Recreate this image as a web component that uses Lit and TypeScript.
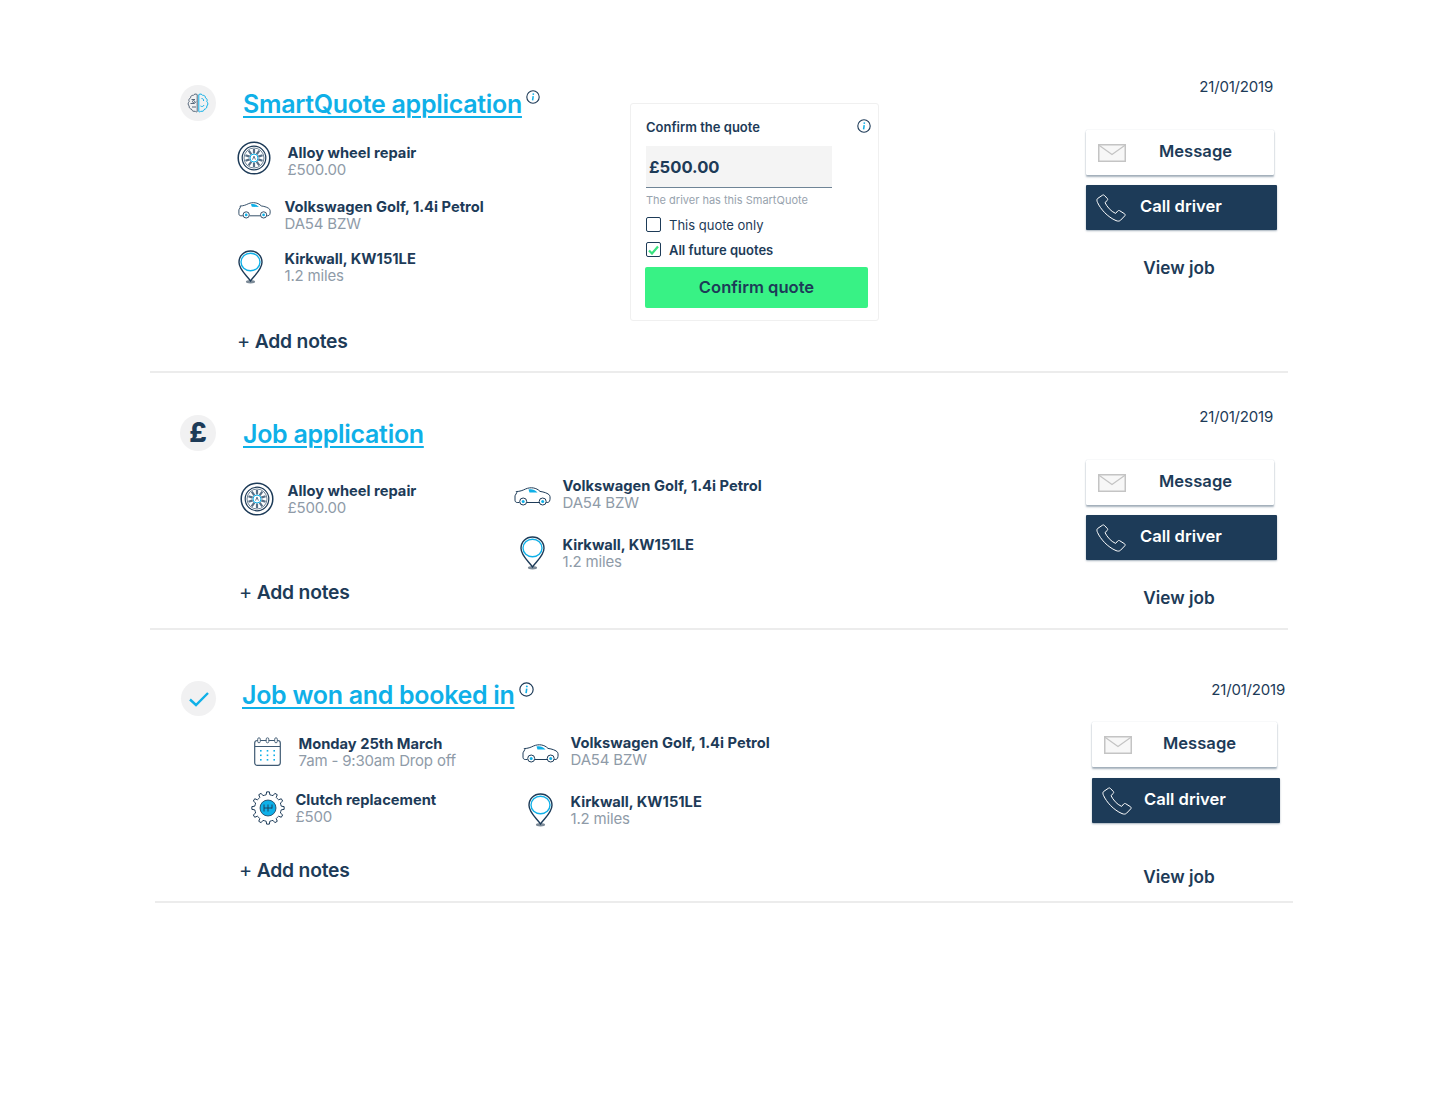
import { LitElement, html, css, svg } from "lit";
import { customElement } from "lit/decorators.js";

const DARK = "#1d3b58";
const BLUE = "#0fb0e8";

const gearPath = (() => {
  const cx = 17, cy = 17, teeth = 12;
  let d = "";
  for (let i = 0; i < teeth; i++) {
    const a = (i / teeth) * Math.PI * 2;
    const step = (Math.PI * 2) / teeth;
    const pts: [number, number][] = [
      [13.2, a - step * 0.5],
      [13.4, a - step * 0.26],
      [16.2, a - step * 0.16],
      [16.2, a + step * 0.16],
      [13.4, a + step * 0.26],
    ];
    for (const [r, t] of pts) {
      d += `${d ? "L" : "M"}${(cx + r * Math.cos(t)).toFixed(2)} ${(cy + r * Math.sin(t)).toFixed(2)}`;
    }
  }
  return d + "Z";
})();

const spokes = Array.from({ length: 10 }, (_, i) => (i * 360) / 10);

const wheel = html`<svg width="34" height="34" viewBox="0 0 34 34" fill="none">
  <circle cx="17" cy="17" r="15.8" stroke=${DARK} stroke-width="1.5"/>
  <circle cx="17" cy="17" r="11.8" stroke=${DARK} stroke-width="1.2"/>
  <circle cx="17" cy="17" r="10" stroke="#6f8496" stroke-width="1"/>
  ${spokes.map((r) => svg`<path d="M17 12.5V8" stroke="#587087" stroke-width="2.2" transform="rotate(${r} 17 17)"/>`)}
  <circle cx="17" cy="17" r="4" fill="#fff" stroke=${BLUE} stroke-width="1"/>
  <path d="M15.6 18.6L17 15.2 18.4 18.6" stroke=${DARK} stroke-width=".7"/>
</svg>`;

const car = (w: number) => html`<svg width=${w} height="20" viewBox="0 0 37 20" fill="none">
  <path d="M5.5 16.5H3.2C1.8 16.5 1 15.5 1 14.2V9.8L2.8 6.6 2.2 5.6C6 5.4 8.5 4.5 11.5 3 16.5 .8 22.5 1.6 26 5.4 30 6 34 7.2 35.6 9.3 36.3 10.6 36.2 13.5 35.6 15 35.2 16 34.3 16.5 33 16.5H32.2M12.9 16.5H25" stroke=${DARK} stroke-width="1"/>
  <path d="M14.5 3.6C17.5 3 20.5 3.3 23.5 6.6L15.5 6.4Z" fill=${BLUE}/>
  <circle cx="9.2" cy="15.5" r="3.5" fill="#fff" stroke=${DARK} stroke-width="1"/>
  <circle cx="9.2" cy="15.5" r="1.5" fill=${BLUE}/>
  <circle cx="28.7" cy="15.5" r="3.5" fill="#fff" stroke=${DARK} stroke-width="1"/>
  <circle cx="28.7" cy="15.5" r="1.5" fill=${BLUE}/>
</svg>`;

const pin = html`<svg width="25" height="34" viewBox="0 0 25 34" fill="none">
  <ellipse cx="12.5" cy="31.7" rx="4.6" ry="1.7" fill="#7d8b98"/>
  <path d="M12.5 31C9.5 26 1 20 1 12.3 1 5.6 6 1 12.5 1S24 5.6 24 12.3C24 20 15.5 26 12.5 31Z" fill="#fff" stroke=${DARK} stroke-width="1.4"/>
  <ellipse cx="12.5" cy="12" rx="9.5" ry="8.8" fill="#fff" stroke=${BLUE} stroke-width="1.4"/>
</svg>`;

const calendar = html`<svg width="27" height="29" viewBox="0 0 27 29" fill="none">
  <rect x=".7" y="3.5" width="25.6" height="24.8" rx="2.5" stroke="#3f5a73" stroke-width="1.2"/>
  <path d="M1 9.5H26" stroke="#3f5a73" stroke-width="1"/>
  ${[5, 13.5, 22].map((x) => svg`<rect x=${x - 1.3} y=".8" width="2.6" height="5" rx="1.3" fill="#fff" stroke="#3f5a73" stroke-width=".9"/>`)}
  ${[13, 17.5, 22].map((y) => [6, 12.7, 19.4].map((x) => svg`<rect x=${x} y=${y} width="1.6" height="1.6" fill=${BLUE}/>`))}
</svg>`;

const gear = html`<svg width="34" height="34" viewBox="0 0 34 34" fill="none">
  <path d=${gearPath} fill="#fff" stroke=${DARK} stroke-width="1"/>
  <circle cx="17" cy="17" r="8" fill=${BLUE} stroke=${DARK} stroke-width=".8"/>
  <path d="M13 13.5v7M17 13.5v7M21 13.5v4M13 17h8" stroke=${DARK} stroke-width=".9"/>
</svg>`;

const brain = html`<svg width="22" height="20" viewBox="0 0 22 20" fill="none" stroke-width="1">
  <g stroke="#56677a">
    <path d="M10.2 1.6C8.8.6 7 1 6.4 2.4 4.8 2 3.4 3.2 3.6 4.8 2 5.4 1.4 7.2 2.2 8.6 .8 9.8 .8 12 2.2 13 1.8 14.6 3 16 4.4 16 4.8 17.8 6.6 18.8 8.2 18.2 8.8 19 9.6 19 10.2 18.6Z"/>
    <path d="M4.5 6.5H8M3.5 10.5H7.5L9 8.5M5 14h4"/>
    <circle cx="6.5" cy="8.5" r="1"/>
  </g>
  <g stroke=${BLUE}>
    <path d="M11.8 1.6C13.2.6 15 1 15.6 2.4 17.2 2 18.6 3.2 18.4 4.8 20 5.4 20.6 7.2 19.8 8.6 21.2 9.8 21.2 12 19.8 13 20.2 14.6 19 16 17.6 16 17.2 17.8 15.4 18.8 13.8 18.2 13.2 19 12.4 19 11.8 18.6Z"/>
    <path d="M14.5 5.5c1.5 0 2.5 1 2 2.5M13.5 13c1.5 1 3 .5 3.5-1"/>
  </g>
</svg>`;

const pound = html`<span class="pound">£</span>`;

const tick = html`<svg width="22" height="16" viewBox="0 0 22 16" fill="none">
  <path d="M2 8.5L8 14 20 2" stroke=${BLUE} stroke-width="2.4"/>
</svg>`;

const info = (s: number) => html`<svg class="info" width=${s} height=${s} viewBox="0 0 14 14" fill="none">
  <circle cx="7" cy="7" r="6.2" stroke=${DARK} stroke-width="1.1"/>
  <circle cx="7.3" cy="4.1" r=".9" fill=${BLUE}/>
  <path d="M7.2 6.2L6.6 10.4" stroke=${BLUE} stroke-width="1.5"/>
</svg>`;

const envelope = html`<svg width="28" height="18" viewBox="0 0 28 18" fill="none">
  <rect x=".75" y=".75" width="26.5" height="16.5" fill="#f7f7f7" stroke="#c4c4c4" stroke-width="1.5"/>
  <path d="M1 1.2L14 10.5 27 1.2" stroke="#c4c4c4" stroke-width="1.2"/>
</svg>`;

const phone = html`<svg width="30" height="28" viewBox="0 0 30 28" fill="none">
  <path d="M6.5 1.2L1.6 4.5C.6 5.3 .8 7 1.6 8.6 4.5 15 11.5 23 20 26.6 22 27.4 23.6 27.2 24.6 26.2L28.8 21.8C29.4 21 29.2 20.2 28.4 19.7L23.8 16.8C23 16.3 22.3 16.4 21.7 17L19.6 19.4C14.8 17.4 11 12.6 9 8.6L11.2 6.5C11.8 6 11.8 5.2 11.4 4.6L8.4 1.4C7.8 .8 7.1 .8 6.5 1.2Z" stroke="#fff" stroke-width="1"/>
</svg>`;

const item = (slot: string, icon: unknown, title: string, sub: string, cls = "") => html`
  <div class="item ${cls}">
    <div class="slot ${slot}">${icon}</div>
    <div class="text"><div class="t">${title}</div><div class="s">${sub}</div></div>
  </div>`;

const actions = () => html`
  <div class="actions">
    <div class="date">21/01/2019</div>
    <div class="btn msg">${envelope}<span>Message</span></div>
    <div class="btn call">${phone}<span>Call driver</span></div>
    <div class="view">View job</div>
  </div>`;

@customElement("app-root")
export class AppRoot extends LitElement {
  static styles = css`
    :host { display: block; font-family: Inter, "Liberation Sans", sans-serif; color: #1d3b58; background: #fff; min-height: 1099px; }
    .page { padding-top: 73px; }
    .job { display: flex; align-items: flex-start; width: 1138px; margin-left: 150px; border-bottom: 2px solid #ececec; box-sizing: border-box; }
    .j1 { height: 300px; } .j2 { height: 257px; } .j3 { height: 273px; margin-left: 155px; }

    .status-slot { flex: 0 0 87px; box-sizing: border-box; padding-left: 30px; }
    .j3 .status-slot { flex-basis: 82px; padding-left: 26px; }
    .status { width: 36px; height: 36px; border-radius: 50%; background: #f1f1f2; display: flex; align-items: center; justify-content: center; }
    .j1 .status { margin-top: 12px; } .j2 .status { margin-top: 42px; } .j3 .status { margin-top: 51px; width: 35px; height: 35px; }
    .pound { font-size: 27px; font-weight: 800; line-height: 1; margin-top: -1px; }

    .main { flex: 0 0 393px; }
    .j2 .main, .j3 .main { flex-basis: 640px; }
    .head { display: flex; align-items: flex-start; margin-left: 6px; line-height: 32px; }
    .j1 .head { margin-top: 15px; } .j2 .head { margin-top: 45px; } .j3 .head { margin-top: 49px; margin-left: 5px; }
    .title { font-size: 25px; font-weight: 600; color: #0fb0e8; text-decoration: underline; text-decoration-thickness: 2px; text-underline-offset: 3px; letter-spacing: -0.3px; white-space: nowrap; }
    .head .info { margin: 2px 0 0 4px; flex: none; }
    .j3 .head .info { margin-top: 3px; }

    .list { display: flex; flex-direction: column; margin-top: 24px; }
    .list .item + .item { margin-top: 20px; }
    .list .item:last-child { margin-top: 18px; }
    .grid { display: grid; }
    .j2 .grid { grid-template-columns: 274px auto; grid-template-rows: 39px 34px; row-gap: 20px; margin: 27px 0 0 3px; }
    .j3 .grid { grid-template-columns: 271px auto; row-gap: 22px; margin: 24px 0 0 14px; }
    .low { margin-top: 5px; }
    .skip { grid-column: 2; }
    .down2 { margin-top: 2px; }
    .rise { margin-top: -1px; }

    .item { display: flex; align-items: flex-start; height: 34px; }
    .slot { flex: none; display: flex; align-items: flex-start; box-sizing: border-box; }
    .w51 { width: 51px; } .w48 { width: 48px; } .w49 { width: 49px; } .w45 { width: 45px; }
    .l1 { padding-left: 1px; } .l2 { padding-left: 2px; } .l3 { padding-left: 3px; } .l6 { padding-left: 6px; }
    .up3 { margin-top: -3px; } .d2 { margin-top: 2px; } .d9 { margin-top: 9px; }
    .text { margin-left: -0.5px; padding-top: 1px; }
    .t { font-size: 14.7px; font-weight: 700; line-height: 17px; white-space: nowrap; }
    .s { font-size: 15px; line-height: 17px; margin-top: -1px; color: #8f9ba8; white-space: nowrap; letter-spacing: -0.17px; }

    .notes { font-size: 19.3px; font-weight: 600; line-height: 24px; letter-spacing: -0.2px; }
    .notes b { font-weight: 400; font-size: 20px; }
    .j1 .notes { margin: 45px 0 0 0; } .j2 .notes { margin: 10px 0 0 2px; } .j3 .notes { margin: 31px 0 0 2px; }

    .panel { flex: none; width: 249px; height: 218px; box-sizing: border-box; margin-top: 30px; border: 1px solid #f0f0f0; border-radius: 3px; padding: 15px 10px 0 15px; }
    .phead { display: flex; justify-content: space-between; align-items: center; height: 16px; font-size: 13px; font-weight: 600; }
    .phead span { margin-top: -1px; }
    .phead .info { margin-top: -2px; margin-right: -3px; }
    .field { width: 186px; height: 42px; box-sizing: border-box; margin-top: 11px; background: #f4f4f4; border-bottom: 1px solid #6f8496; padding-left: 3px; display: flex; align-items: center; font-size: 16.6px; font-weight: 700; }
    .help { margin-top: 5px; font-size: 11px; line-height: 14px; color: #98a3ae; white-space: nowrap; }
    .check { display: flex; align-items: center; gap: 8px; margin-top: 10px; height: 15px; font-size: 13px; white-space: nowrap; }
    .check.on { font-weight: 600; }
    .box { width: 15px; height: 15px; box-sizing: border-box; border: 1.5px solid #1d3b58; border-radius: 2px; flex: none; display: flex; align-items: center; justify-content: center; }
    .go { margin: 10px 0 0 -1px; width: 223px; height: 41px; box-sizing: border-box; padding-bottom: 2px; background: #38f285; border-radius: 2px; display: flex; align-items: center; justify-content: center; font-size: 16.6px; font-weight: 600; }

    .actions { flex: none; margin-left: auto; width: 202px; }
    .j3 .actions { width: 201px; }
    .date { height: 18px; line-height: 18px; font-size: 15px; text-align: right; padding-right: 15px; letter-spacing: -0.2px; margin-top: 5px; }
    .j2 .date { margin-top: 35px; }
    .j3 .date { margin-top: 51px; padding-right: 8px; }
    .btn { height: 45px; display: flex; align-items: center; box-sizing: border-box; font-size: 16.6px; font-weight: 600; border-radius: 1px; white-space: nowrap; }
    .btn span { margin-top: -3px; }
    .msg { width: 188px; margin-top: 34px; padding-left: 12px; background: #fff; box-shadow: 0 0 1px rgba(29,59,88,.3), 0 2px 2px rgba(29,59,88,.4); }
    .msg span { margin-left: 33px; }
    .call { width: 191px; margin-top: 10px; padding-left: 10px; background: #1d3b58; color: #fff; box-shadow: 0 1px 2px rgba(29,59,88,.4); }
    .call span { margin-left: 14px; }
    .j3 .msg { width: 185px; margin-top: 23px; }
    .j3 .msg span { margin-left: 31px; }
    .j3 .call { width: 188px; margin-top: 11px; }
    .j3 .call span { margin-left: 12px; }
    .view { width: 186px; margin-top: 28px; line-height: 20px; text-align: center; font-size: 17.2px; font-weight: 600; }
    .j3 .view { width: 174px; margin-top: 44px; }
  `;

  render() {
    return html`<div class="page">
      <section class="job j1">
        <div class="status-slot"><div class="status">${brain}</div></div>
        <div class="main">
          <div class="head"><span class="title">SmartQuote application</span>${info(14)}</div>
          <div class="list">
            ${item("w51 up3", wheel, "Alloy wheel repair", "£500.00")}
            ${item("w48 l1 d2", car(33), "Volkswagen Golf, 1.4i Petrol", "DA54 BZW")}
            ${item("w48 l1", pin, "Kirkwall, KW151LE", "1.2 miles")}
          </div>
          <div class="notes"><b>+</b> Add notes</div>
        </div>
        <div class="panel">
          <div class="phead"><span>Confirm the quote</span>${info(14)}</div>
          <div class="field">£500.00</div>
          <div class="help">The driver has this SmartQuote</div>
          <div class="check"><span class="box"></span>This quote only</div>
          <div class="check on"><span class="box"><svg width="11" height="10" viewBox="0 0 11 10" fill="none"><path d="M1 5.5L4 8.5 10 1.5" stroke="#38e27f" stroke-width="2.2"/></svg></span>All future quotes</div>
          <div class="go">Confirm quote</div>
        </div>
        ${actions()}
      </section>

      <section class="job j2">
        <div class="status-slot"><div class="status">${pound}</div></div>
        <div class="main">
          <div class="head"><span class="title">Job application</span></div>
          <div class="grid">
            ${item("w48", wheel, "Alloy wheel repair", "£500.00", "low")}
            ${item("w49 d9", car(37), "Volkswagen Golf, 1.4i Petrol", "DA54 BZW")}
            ${item("w49 l6", pin, "Kirkwall, KW151LE", "1.2 miles", "skip")}
          </div>
          <div class="notes"><b>+</b> Add notes</div>
        </div>
        ${actions()}
      </section>

      <section class="job j3">
        <div class="status-slot"><div class="status">${tick}</div></div>
        <div class="main">
          <div class="head"><span class="title">Job won and booked in</span>${info(15)}</div>
          <div class="grid">
            ${item("w48 l3 d2", calendar, "Monday 25th March", "7am - 9:30am Drop off")}
            ${item("w49 d9", car(37), "Volkswagen Golf, 1.4i Petrol", "DA54 BZW", "rise")}
            ${item("w45", gear, "Clutch replacement", "£500")}
            ${item("w49 l6", pin, "Kirkwall, KW151LE", "1.2 miles", "down2")}
          </div>
          <div class="notes"><b>+</b> Add notes</div>
        </div>
        ${actions()}
      </section>
    </div>`;
  }
}
